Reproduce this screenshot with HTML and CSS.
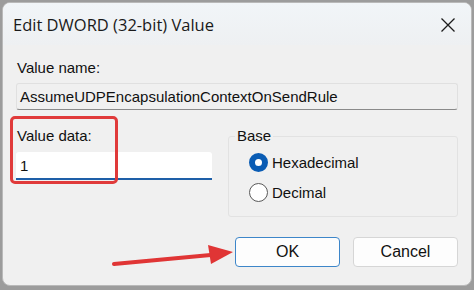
FILE: index.html
```html
<!DOCTYPE html>
<html lang="en">
<head>
  <meta charset="UTF-8">
  <title>Edit DWORD (32-bit) Value</title>
  <link rel="stylesheet" href="styles.css">
</head>
<body>

  <div class="dialog">
    <div class="titlebar">
      <span class="title">Edit DWORD (32-bit) Value</span>
      <svg class="close" width="16" height="16" viewBox="0 0 16 16">
        <path d="M1.5 1.5 L14.5 14.5 M14.5 1.5 L1.5 14.5" stroke="#1c1c1c" stroke-width="1.3" fill="none"/>
      </svg>
    </div>

    <div class="content">
      <label class="field-label">Value name:</label>
      <div class="name-box">AssumeUDPEncapsulationContextOnSendRule</div>

      <div class="row">
        <div class="data-col">
          <label class="field-label">Value data:</label>
          <div class="data-box">1</div>
        </div>

        <fieldset class="base">
          <legend>Base</legend>
          <div class="radio">
            <span class="dot checked"></span>
            <span>Hexadecimal</span>
          </div>
          <div class="radio">
            <span class="dot"></span>
            <span>Decimal</span>
          </div>
        </fieldset>
      </div>

      <div class="buttons">
        <button class="btn default">OK</button>
        <button class="btn">Cancel</button>
      </div>
    </div>

    <!-- annotations drawn over the dialog -->
    <div class="highlight"></div>
    <svg class="arrow" width="130" height="30" viewBox="0 0 130 30">
      <path d="M2 25 L104 15.5" stroke="#e03535" stroke-width="4" stroke-linecap="round" fill="none"/>
      <path d="M96 6 L121 13 L99 25 Z" fill="#e03535"/>
    </svg>
  </div>

</body>
</html>
```

FILE: styles.css
```css
body {
  margin: 0;
  padding: 2px;
  background: #9c9c9c;
  font-family: 'Liberation Sans', Arial, sans-serif;
  color: #111;
}

.dialog {
  position: relative;
  width: 468px;
  height: 282px;
  background: #f0f0f0;
  border: 1px solid #b9b9b9;
  border-radius: 8px;
  overflow: hidden;
}

.titlebar {
  height: 42px;
  display: flex;
  align-items: center;
  justify-content: space-between;
  padding: 0 15px 0 10px;
  background: linear-gradient(#f1f5f8, #eef0f2);
}

.title {
  font-family: 'Open Sans', 'Noto Sans', sans-serif;
  font-size: 16.5px;
  color: #1a1a1a;
}

.close {
  margin-top: 2px;
}

.content {
  padding: 13px 13px 0 13px;
}

.field-label {
  display: block;
  font-size: 15px;
  line-height: 20px;
  margin-left: 1px;
}

.name-box {
  margin-top: 5px;
  height: 25px;
  line-height: 26px;
  padding-left: 3px;
  font-size: 15px;
  background: #f0f0f0;
  border: 1px solid #e0e0e0;
  border-bottom-color: #8a8a8a;
  border-radius: 3px;
}

.row {
  display: flex;
  align-items: flex-start;
  margin-top: 16px;
}

.data-col {
  width: 196px;
}

.data-box {
  margin-top: 6px;
  height: 26px;
  line-height: 28px;
  padding-left: 4px;
  font-size: 15px;
  background: #fff;
  border-bottom: 2px solid #1e5fa8;
  border-radius: 3px 3px 0 0;
}

.base {
  margin: 0 0 0 16px;
  padding: 1px 0 0 20px;
  width: 230px;
  height: 91px;
  box-sizing: border-box;
  border: 1px solid #e2e2e2;
  border-radius: 3px;
  font-size: 15px;
}

.base legend {
  padding: 0 2px;
  margin-left: -14px;
  line-height: 20px;
}

.radio {
  display: flex;
  align-items: center;
  gap: 4px;
  height: 30px;
}

.dot {
  width: 19px;
  height: 19px;
  box-sizing: border-box;
  border: 1px solid #5a5a5a;
  border-radius: 50%;
  background: #fff;
}

.dot.checked {
  border: 6px solid #0a5cb4;
  background: #fff;
}

.buttons {
  display: flex;
  justify-content: flex-end;
  gap: 13px;
  margin-top: 20px;
}

.btn {
  width: 105px;
  height: 30px;
  font-family: 'Liberation Sans', Arial, sans-serif;
  font-size: 16px;
  color: #111;
  background: #fdfdfd;
  border: 1px solid #d6d6d6;
  border-radius: 4px;
}

.btn.default {
  border-color: #3d86c9;
}

.highlight {
  position: absolute;
  left: 7px;
  top: 113px;
  width: 102px;
  height: 62px;
  border: 3px solid #e03a3a;
  border-radius: 5px;
}

.arrow {
  position: absolute;
  left: 109px;
  top: 236px;
}
```
